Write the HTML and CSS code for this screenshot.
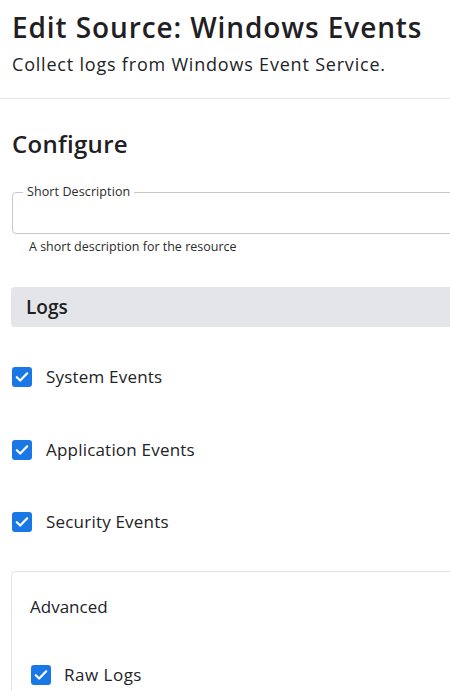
FILE: index.html
```html
<!DOCTYPE html>
<html lang="en">
<head>
<meta charset="utf-8">
<title>Edit Source: Windows Events</title>
<link rel="stylesheet" href="styles.css">
</head>
<body>
<div class="page">
  <header class="header">
    <h1 class="title">Edit Source: Windows Events</h1>
    <p class="subtitle">Collect logs from Windows Event Service.</p>
  </header>
  <main class="content">
    <h2 class="section-title">Configure</h2>
    <fieldset class="field">
      <legend class="field-label">Short Description</legend>
      <div class="field-input"></div>
    </fieldset>
    <p class="helper">A short description for the resource</p>

    <div class="group-bar">Logs</div>

    <div class="checks">
      <label class="check-row"><span class="box"><svg viewBox="0 0 20 20" width="20" height="20"><path d="M4.8 10.2l3.4 3.3 7-7.2" fill="none" stroke="#fff" stroke-width="2.2" stroke-linecap="round" stroke-linejoin="round"/></svg></span><span class="check-label">System Events</span></label>
      <label class="check-row"><span class="box"><svg viewBox="0 0 20 20" width="20" height="20"><path d="M4.8 10.2l3.4 3.3 7-7.2" fill="none" stroke="#fff" stroke-width="2.2" stroke-linecap="round" stroke-linejoin="round"/></svg></span><span class="check-label">Application Events</span></label>
      <label class="check-row"><span class="box"><svg viewBox="0 0 20 20" width="20" height="20"><path d="M4.8 10.2l3.4 3.3 7-7.2" fill="none" stroke="#fff" stroke-width="2.2" stroke-linecap="round" stroke-linejoin="round"/></svg></span><span class="check-label">Security Events</span></label>
    </div>

    <section class="card">
      <div class="card-title">Advanced</div>
      <label class="check-row card-row"><span class="box"><svg viewBox="0 0 20 20" width="20" height="20"><path d="M4.8 10.2l3.4 3.3 7-7.2" fill="none" stroke="#fff" stroke-width="2.2" stroke-linecap="round" stroke-linejoin="round"/></svg></span><span class="check-label">Raw Logs</span></label>
    </section>
  </main>
</div>
</body>
</html>
```

FILE: styles.css
```css
* { box-sizing: border-box; }

html, body {
  margin: 0;
  padding: 0;
  background: #ffffff;
  overflow: hidden;
}

body {
  font-family: "Open Sans", "Noto Sans", sans-serif;
  color: #222326;
}

.page {
  width: 640px;
}

.header {
  padding: 8px 12px 22px;
  border-bottom: 1px solid #e4e4e4;
}

.title {
  margin: 0;
  font-size: 28px;
  line-height: 38px;
  font-weight: 600;
  letter-spacing: 0.9px;
  color: #1f2023;
}

.subtitle {
  margin: 6px 0 0;
  font-size: 18px;
  line-height: 24px;
  font-weight: 400;
  letter-spacing: 0.8px;
}

.content {
  padding: 0 0 0 11px;
}

.section-title {
  margin: 29px 0 0 1px;
  font-size: 24px;
  line-height: 32px;
  font-weight: 600;
  letter-spacing: 0.3px;
  color: #1f2023;
}

.field {
  margin: 24px 0 0 1px;
  padding: 0 10px;
  border: 1px solid #c8c8c8;
  border-radius: 4px;
  min-width: 0;
}

.field-label {
  padding: 0 4px;
  font-size: 12.5px;
  line-height: 16px;
  letter-spacing: 0.1px;
  color: #2b2b2b;
}

.field-input {
  height: 33px;
}

.helper {
  margin: 5px 0 0 18px;
  font-size: 12.5px;
  line-height: 16px;
  color: #2b2b2b;
}

.group-bar {
  margin-top: 32px;
  height: 40px;
  padding-left: 15px;
  background: #e4e5e9;
  border-radius: 4px;
  font-size: 19px;
  font-weight: 600;
  line-height: 40px;
  color: #1f2023;
}

.checks {
  display: flex;
  flex-direction: column;
  gap: 48.5px;
  margin-top: 38px;
  padding-left: 1px;
}

.check-row {
  display: flex;
  align-items: center;
  gap: 14px;
  height: 24px;
  font-size: 17px;
  line-height: 24px;
  letter-spacing: 0.2px;
}

.box {
  width: 20px;
  height: 20px;
  border-radius: 3px;
  background: #1a78e6;
  display: flex;
  flex-shrink: 0;
}

.box svg { display: block; }

.card {
  margin-top: 37px;
  border: 1px solid #e3e3e3;
  border-radius: 4px;
  padding: 23px 18px 20px;
  height: 200px;
}

.card-title {
  font-size: 17px;
  line-height: 24px;
}

.card-row {
  margin-top: 44px;
  padding-left: 1px;
  gap: 13px;
  letter-spacing: 0.5px;
}
```
